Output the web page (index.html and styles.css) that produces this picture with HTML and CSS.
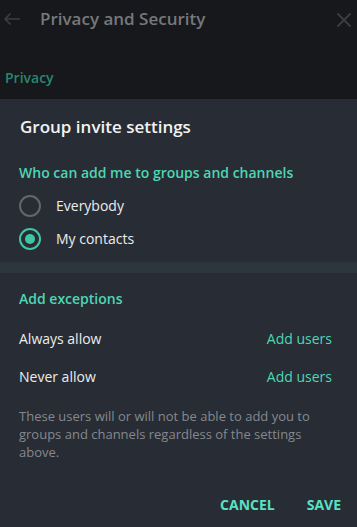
FILE: index.html
```html
<!DOCTYPE html>
<html>
<head>
<meta charset="utf-8">
<link rel="stylesheet" href="styles.css">
</head>
<body>
<div class="screen">
  <header class="topbar">
    <div class="bar">
      <svg class="back" width="18" height="14" viewBox="0 0 18 14"><path d="M17 7H2M7.5 1.5L2 7l5.5 5.5" fill="none" stroke="#3c3e42" stroke-width="1.6"/></svg>
      <span class="bar-title">Privacy and Security</span>
      <svg class="close" width="16" height="16" viewBox="0 0 16 16"><path d="M1.5 1.5l13 13M14.5 1.5l-13 13" fill="none" stroke="#3c3e42" stroke-width="1.8"/></svg>
    </div>
    <div class="section-label">Privacy</div>
  </header>
  <main class="dialog">
    <h1 class="dlg-title">Group invite settings</h1>
    <div class="subhead">Who can add me to groups and channels</div>
    <div class="radio-row"><span class="radio"></span><span>Everybody</span></div>
    <div class="radio-row"><span class="radio on"></span><span>My contacts</span></div>
    <div class="divider"></div>
    <div class="subhead sub2">Add exceptions</div>
    <div class="ex-row"><span>Always allow</span><span class="link">Add users</span></div>
    <div class="ex-row"><span>Never allow</span><span class="link">Add users</span></div>
    <p class="desc">These users will or will not be able to add you to groups and channels regardless of the settings above.</p>
    <div class="buttons"><span class="btn">CANCEL</span><span class="btn">SAVE</span></div>
  </main>
</div>
</body>
</html>
```
FILE: styles.css
```css
html, body { margin: 0; padding: 0; }
body {
  background: #282c34;
  font-family: "Open Sans", "Noto Sans", sans-serif;
  width: 357px;
  height: 527px;
  overflow: hidden;
}
.screen { display: flex; flex-direction: column; height: 527px; }
.topbar { background: #16181b; height: 99px; display: flex; flex-direction: column; }
.bar { display: flex; align-items: center; height: 38px; padding: 0 2px 0 3px; }
.back { flex: none; }
.bar-title { margin-left: 19px; font-size: 17px; font-weight: 600; color: #76787b; flex: 1; line-height: 38px; }
.close { margin-right: 3px; margin-top: 2px; }
.section-label { margin-top: 30px; padding-left: 5px; font-size: 14px; font-weight: 600; color: #2b8670; line-height: 20px; }
.dialog { flex: 1; background: #282c34; display: flex; flex-direction: column; }
.dlg-title { margin: 0; padding: 16px 20px 0; font-size: 17px; font-weight: 600; color: #f2f2f2; line-height: 24px; }
.subhead { padding: 24px 19px 0; font-size: 14px; font-weight: 600; color: #4ed6b4; line-height: 20px; }
.radio-row { display: flex; align-items: center; height: 33px; padding-left: 19px; font-size: 14px; color: #ececec; }
.subhead + .radio-row { margin-top: 6px; }
.radio { width: 18px; height: 18px; border: 2px solid #646669; border-radius: 50%; margin-right: 15px; box-sizing: content-box; display: flex; align-items: center; justify-content: center; flex: none; }
.radio.on { border-color: #3fc6a6; }
.radio.on::after { content: ""; width: 10px; height: 10px; border-radius: 50%; background: #3fc6a6; }
.divider { height: 11px; background: #2d363e; margin-top: 7px; }
.sub2 { padding-top: 16px; }
.ex-row { display: flex; justify-content: space-between; align-items: center; height: 38px; padding: 0 25px 0 19px; font-size: 14px; color: #ececec; }
.sub2 + .ex-row { margin-top: 10px; }
.link { color: #4ed6b4; }
.desc { margin: 12px 0 0; padding: 0 25px 0 19px; font-size: 13px; line-height: 18px; color: #85898e; }
.buttons { display: flex; justify-content: flex-end; gap: 32px; padding: 34px 16px 0; }
.btn { font-size: 14px; font-weight: 700; color: #5ae0c2; line-height: 20px; }
```
